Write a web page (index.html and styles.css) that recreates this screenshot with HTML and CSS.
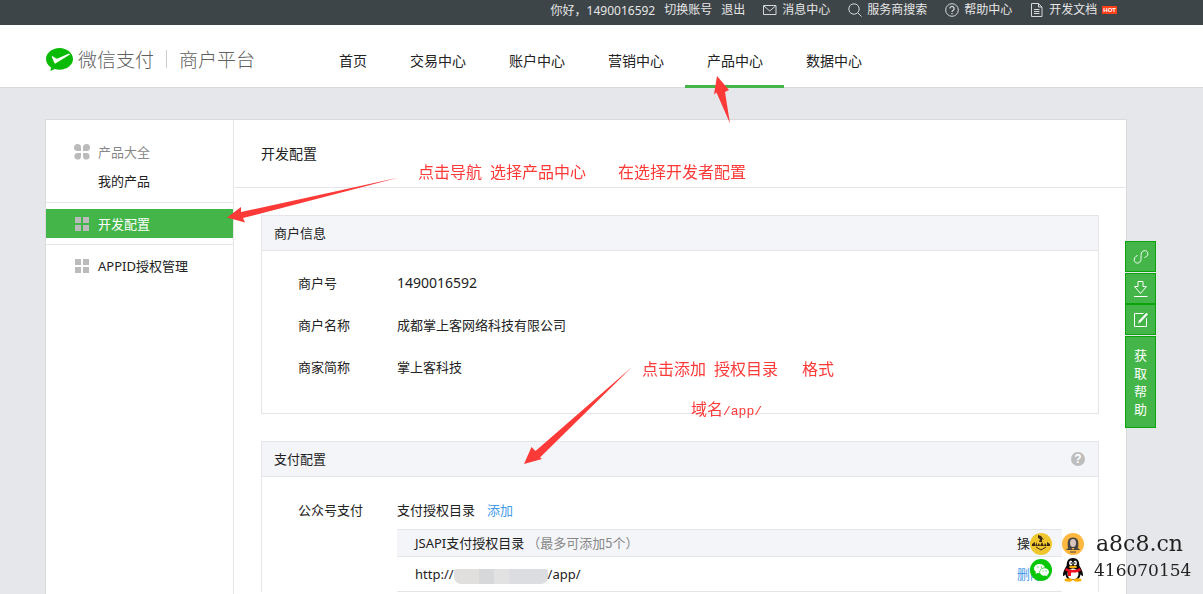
FILE: index.html
```html
<!DOCTYPE html>
<html lang="zh-CN">
<head>
<meta charset="utf-8">
<title>微信支付商户平台</title>
<link rel="stylesheet" href="styles.css">
</head>
<body>
<div class="page">
  <div class="topbar">
    <span class="hello">你好<span class="comma">，</span>1490016592</span>
    <a href="#" class="switch">切换账号</a>
    <a href="#" class="logout">退出</a>
    <a href="#" class="tool"><svg width="14" height="14" viewBox="0 0 14 14"><path d="M.5 2.500h12.500v9H.5zM1 3l5.750 5L12.500 3"/></svg>消息中心</a>
    <a href="#" class="tool"><svg width="14" height="14" viewBox="0 0 14 14"><circle cx="6" cy="6" r="5.200"/><path d="M9.800 9.800l3.700 3.700"/></svg>服务商搜索</a>
    <a href="#" class="tool"><svg width="14" height="14" viewBox="0 0 14 14"><circle cx="7" cy="7" r="6.300"/><path d="M4.900 5.500a2.100 2.100 0 1 1 3.300 1.700C7.400 7.700 7 8 7 8.900M7 10v1.300" stroke-width="1.300"/></svg>帮助中心</a>
    <a href="#" class="tool"><svg width="14" height="14" viewBox="0 0 14 14"><path d="M1.500.5h7l3.500 3.500v9.500H1.500zM8.500.5V4H12M4 6.500h5.500M4 8.500h5.500M4 10.500h5.500"/></svg>开发文档<span class="hot">HOT</span></a>
  </div>
  <header class="header">
    <a href="#" class="brand">
      <svg width="27" height="25" viewBox="0 0 27 25"><path fill="#09bb07" d="M13.500 1C6 1 0 6 0 12c0 3.500 1.900 6.500 5 8.500L4.500 24l4.300-2c1.500.5 3 .7 4.700.7C21 22.700 27 18 27 12S21 1 13.500 1z"/><path fill="#fff" d="M9.800 16.300c-.7.400-1.200.1-1.500-.5L5.800 10c-.2-.8.400-1 1-.7l3.300 2.200 1.500.1L23 6.400c.5.400.8.800 1 1.200z"/></svg>
      <span>微信支付</span><span class="brand-sub">商户平台</span>
    </a>
    <nav class="nav">
      <a href="#">首页</a><a href="#">交易中心</a><a href="#">账户中心</a><a href="#">营销中心</a><a href="#" class="active">产品中心</a><a href="#">数据中心</a>
    </nav>
  </header>
  <main class="panel">
    <aside class="side">
      <div class="side-group">
        <a href="#" class="side-title"><svg width="16" height="16" viewBox="0 0 16 16"><path d="M3.500 0A3.500 3.500 0 1 0 3.500 7H7V3.500A3.500 3.500 0 0 0 3.500 0zM12.500 0A3.500 3.500 0 0 0 9 3.500V7h3.500a3.500 3.500 0 0 0 0-7zM3.500 9H7v3.500A3.300 3.300 0 1 1 3.500 9zM9 9h3.500A3.300 3.300 0 1 1 9 12.500z"/></svg>产品大全</a>
        <a href="#" class="side-sub">我的产品</a>
      </div>
      <div class="side-group">
        <a href="#" class="side-item current"><svg width="16" height="16" viewBox="0 0 16 16"><path d="M1 1h6v6H1zM9 1h6v6H9zM1 9h6v6H1zM9 9h6v6H9z"/></svg>开发配置</a>
      </div>
      <div class="side-group">
        <a href="#" class="side-item"><svg width="16" height="16" viewBox="0 0 16 16"><path d="M1 1h6v6H1zM9 1h6v6H9zM1 9h6v6H1zM9 9h6v6H9z"/></svg>APPID授权管理</a>
      </div>
    </aside>
    <section class="main">
      <h1 class="title">开发配置</h1>
      <div class="boxes">
        <section class="box">
          <h2 class="box-head">商户信息</h2>
          <dl class="info">
            <dt>商户号</dt><dd class="number">1490016592</dd>
            <dt>商户名称</dt><dd>成都掌上客网络科技有限公司</dd>
            <dt>商家简称</dt><dd>掌上客科技</dd>
          </dl>
        </section>
        <section class="box last">
          <h2 class="box-head">支付配置<button class="help" aria-label="帮助">?</button></h2>
          <div class="pay">
            <div class="pay-name">公众号支付</div>
            <div class="pay-body">
              <div class="pay-line">支付授权目录<a href="#" class="link">添加</a></div>
              <table class="dirs">
                <thead><tr><th>JSAPI支付授权目录<span class="hint">（最多可添加5个）</span></th><th class="op">操作</th></tr></thead>
                <tbody><tr><td><span class="url">http://<span class="mask"></span>/app/</span></td><td class="op"><a href="#" class="delete">删除</a></td></tr></tbody>
              </table>
            </div>
          </div>
        </section>
      </div>
    </section>
  </main>
</div>

<div class="float">
  <button aria-label="链接"><svg width="16" height="16" viewBox="0 0 16 16"><path d="M4.500 6.500C2 7.500.8 9.500 1.300 11.700c.6 2.400 3.700 3.200 5.500 1.300 1.700-1.800 1.200-3.400 1.200-5s0-3.700 1-5c1.300-1.800 4.300-1.900 5.400.2 1.100 2.300-.1 4.500-2.900 5.300"/></svg></button>
  <div class="float-pair">
    <button aria-label="下载"><svg width="16" height="16" viewBox="0 0 16 16"><path d="M5 .5h5v5h3.500l-6 7-6-7H5zM1 15.500h13.500"/></svg></button>
    <button aria-label="反馈"><svg width="16" height="16" viewBox="0 0 16 16"><path d="M10.500 1.500h-9v13h12V6"/><path d="M5 11.500l1-3L13.500.8l1.500 1.500-7.500 7.900z" fill="#fff" stroke="none"/></svg></button>
  </div>
  <button class="float-help">获<br>取<br>帮<br>助</button>
</div>

<svg class="arrows" width="1203" height="594" viewBox="0 0 1203 594" aria-hidden="true">
  <path d="M717 76l12 14-4 2 5 31.500-13.500-31-2.500 2z"/>
  <path d="M227 217.500l14-10.500v5l158-34.500L243 218l2 4.500z"/>
  <path d="M524 464l7.500-17 4 4 96.500-84-92 90.500 2 1.500z"/>
</svg>
<div class="note note-nav">点击导航<span>选择产品中心</span><span class="wide">在选择开发者配置</span></div>
<div class="note note-add">点击添加<span>授权目录</span><span class="mid">格式</span></div>
<div class="note note-domain">域名<span class="path">/app/</span></div>

<div class="contact">
  <svg width="22" height="22" viewBox="0 0 22 22"><circle cx="11" cy="11" r="11" fill="#efc62e"/><path fill="#3a2a12" d="M8 2l3 1 3 4-2-1v3H9l1-3-2-1zM2 11l3-2v4l2-4v4l2-3 1 3 2-4 2 4 1-3 2 3v-4l3 2v2H2z"/><path d="M6 14l5 3 5-3" stroke="#3a2a12" fill="none"/></svg>
  <svg width="22" height="22" viewBox="0 0 22 22"><circle cx="11" cy="11" r="11" fill="#ffb83f"/><path d="M6 15c-1-7 0-10.500 5-10.500s6 3.500 5 10.500z" fill="#454545"/><ellipse cx="11" cy="10" rx="3" ry="4" fill="#d6c6bc"/><path d="M4.500 16l4.500-2 2 3 2-3 4.500 2v1h-13zM8 18.500h6v1H8z" fill="#4b4542"/></svg>
  <span class="site">a8c8.cn</span>
  <svg width="22" height="22" viewBox="0 0 22 22"><circle cx="11" cy="11" r="11" fill="#06c60a"/><path fill="#fff" d="M9.500 5C6.500 5 4 7 4 9.500c0 1.500.8 2.700 2 3.500l-.5 2 2-1 2 .2C9 11 11.500 8.500 15 8.600 14.500 6.500 12.300 5 9.500 5z"/><path fill="#fff" d="M14.500 9.300c-2.500 0-4.500 1.600-4.500 3.700s2 3.700 4.500 3.700l1.500-.2 1.500.9-.3-1.600c1.100-.7 1.800-1.700 1.800-2.800 0-2.100-2-3.700-4.500-3.700z"/><path d="M7.500 7.500h1v1h-1zM11 7.500h1v1h-1zM12.500 11.500h1v1h-1zM15.500 11.500h1v1h-1z" fill="#06c60a"/></svg>
  <svg width="22" height="24" viewBox="0 0 22 24"><path d="M11 0C6.500 0 4.500 3 4.700 7.500 4 9 1 13 1 17c0 2 1 1 2.500-.8C4 21 7 22 11 22s7-1 7.500-5.800C20 18 21 19 21 17c0-4-3-8-3.700-9.500C17.500 3 15.500 0 11 0z" fill="#090909"/><ellipse cx="8.800" cy="5" rx="1.700" ry="2.500" fill="#fff"/><ellipse cx="13.200" cy="5" rx="1.700" ry="2.500" fill="#fff"/><circle cx="9.300" cy="5" r=".8"/><circle cx="12.700" cy="5" r=".8"/><ellipse cx="11" cy="9" rx="4" ry="1.200" fill="#ffb000"/><ellipse cx="11" cy="16" rx="5.500" ry="5.500" fill="#fff"/><path d="M4 10c4 2.500 10 2.500 14 0l1 2.500c-3 2-7 2.300-10 2V18H6v-4.200l-3-1.500z" fill="#f20c1d"/><ellipse cx="6.500" cy="22" rx="4" ry="1.700" fill="#ffad00"/><ellipse cx="15.500" cy="22" rx="4" ry="1.700" fill="#ffad00"/></svg>
  <span class="qq">416070154</span>
</div>
</body>
</html>
```

FILE: styles.css
```css
* { box-sizing: border-box; }
body {
  margin: 0;
  background: #e6e7eb;
  color: #222;
  font: 13px/20px "Noto Sans", "Noto Sans CJK SC", sans-serif;
}
a { color: inherit; text-decoration: none; }
h1, h2, dl, dd { margin: 0; font-weight: 400; }
button { padding: 0; border: 0; font: inherit; color: inherit; cursor: pointer; }
.page { display: flex; flex-direction: column; height: 100vh; overflow: hidden; }

.topbar {
  flex: none;
  display: flex;
  justify-content: flex-end;
  height: 25px;
  padding-right: 86px;
  background: #3e4549;
  color: #e6e6e6;
  font-size: 12px;
}
.comma { font-family: "Noto Sans CJK TC", sans-serif; }
.switch { margin-left: 9px; }
.logout { margin-left: 9px; }
.tool { display: flex; align-items: center; height: 20px; margin-left: 18px; gap: 5px; }
.tool svg { fill: none; stroke: #d5d7d8; }
.hot {
  padding: 0 1px;
  background: #ff4018;
  color: #fff;
  font: bold 6px/8px "Liberation Sans", sans-serif;
}

.header {
  flex: none;
  display: flex;
  height: 63px;
  padding-left: 46px;
  background: #fff;
  border-bottom: 1px solid #d9dadc;
}
.brand {
  display: flex;
  align-items: center;
  width: 271px;
  padding-top: 6px;
  color: #606060;
  font: 300 19px/24px "Noto Sans CJK SC", sans-serif;
}
.brand svg { margin-right: 5px; }
.brand-sub { display: flex; align-items: center; }
.brand-sub::before { content: ""; width: 1px; height: 18px; margin: 0 12px; background: #ccc; }
.nav { display: flex; height: 63px; font-size: 14px; line-height: 72px; }
.nav a { padding: 0 21px 0 22px; border-bottom: 3px solid transparent; }
.nav .active { border-color: #44b549; }

.panel {
  flex: auto;
  display: flex;
  margin: 31px 76px 0 45px;
  background: #fff;
  border: 1px solid #d9dadc;
  border-bottom: 0;
}
.side { flex: none; width: 188px; padding-top: 17px; border-right: 1px solid #e4e5e8; }
.side svg { flex: none; fill: #bbb; }
.side-group { padding-bottom: 6px; }
.side-group + .side-group { padding-top: 6px; border-top: 1px solid #e4e5e8; }
.side-title, .side-item { display: flex; align-items: center; gap: 8px; height: 29px; padding-left: 28px; }
.side-title { color: #888; }
.side-sub { display: block; height: 30px; padding-left: 52px; line-height: 30px; }
.current { background: #44b549; color: #fff; }

.main { flex: auto; min-width: 0; }
.title { height: 68px; padding-left: 27px; border-bottom: 1px solid #e4e5e8; font-size: 14px; line-height: 68px; }
.boxes { display: flex; flex-direction: column; gap: 27px; padding: 27px 27px 0; }
.box { border: 1px solid #e4e5e8; }
.last { border-bottom: 0; }
.box-head {
  display: flex;
  justify-content: space-between;
  align-items: center;
  height: 35px;
  padding: 0 13px 0 12px;
  background: #f4f5f9;
  border-bottom: 1px solid #e4e5e8;
  font-size: 13px;
}
.help {
  width: 14px;
  height: 14px;
  border-radius: 50%;
  background: #bdbdbd;
  color: #fff;
  font: bold 12px/14px "Liberation Sans", sans-serif;
}
.info { display: grid; grid-template-columns: 99px 1fr; grid-auto-rows: 42px; padding: 12px 36px 24px; line-height: 40px; }
.number { font-size: 14px; }
.pay { display: grid; grid-template-columns: 99px 1fr; padding: 23px 36px 0; }
.pay-line { height: 29px; }
.link { margin-left: 12px; color: #459ae9; }
.dirs { width: 100%; border-collapse: collapse; text-align: left; }
.dirs th { height: 27px; padding: 0 18px; background: #f4f5f9; border: solid #e4e5e8; border-width: 1px 0; font-weight: 400; }
.dirs td { height: 35px; padding: 0 18px; border-bottom: 1px solid #e4e5e8; }
.dirs .op { width: 45px; padding: 0; white-space: nowrap; }
.hint { margin-left: 3px; color: #888; font-family: "Noto Sans CJK TC", sans-serif; }
.url { display: flex; align-items: center; }
.delete { color: #459ae9; }
.mask {
  width: 94px;
  height: 15px;
  margin-top: 4px;
  border-radius: 2px 2px 7px 7px;
  background: linear-gradient(90deg, #e1dfdd 0 27%, #d6d8d9 27% 43%, #e2e2e2 43% 58%, #dcdde0 58% 100%);
}

.float { position: fixed; top: 241px; right: 47px; display: flex; flex-direction: column; gap: 1px; width: 31px; }
.float-pair { display: flex; flex-direction: column; }
.float button {
  display: flex;
  align-items: center;
  justify-content: center;
  height: 31px;
  background: #44b549;
  border: 1px solid #0ba30b;
  color: #fff;
}
.float svg { fill: none; stroke: #fff; }
.float .float-help { height: 92px; line-height: 18px; }

.arrows { position: absolute; top: 0; left: 0; fill: #fc3a38; pointer-events: none; }
.note { position: absolute; color: #fc3a38; font: 400 16px/20px "Noto Sans CJK SC", sans-serif; white-space: nowrap; }
.note span { margin-left: 8px; }
.note .wide { margin-left: 32px; }
.note .mid { margin-left: 24px; }
.note .path { margin-left: 0; font-family: "Liberation Mono", monospace; font-size: 13px; }
.note-nav { top: 161px; left: 418px; }
.note-add { top: 358px; left: 642px; }
.note-domain { top: 398px; left: 691px; }

.contact {
  position: fixed;
  right: 8px;
  bottom: 11px;
  display: grid;
  grid-template-columns: 22px 22px 101px;
  grid-template-rows: 26px 26px;
  column-gap: 10px;
  align-items: center;
  color: #222;
  font-family: "DejaVu Serif", serif;
  white-space: nowrap;
}
.site { padding-left: 2px; font-size: 22px; }
.qq { font-size: 17px; }
```
